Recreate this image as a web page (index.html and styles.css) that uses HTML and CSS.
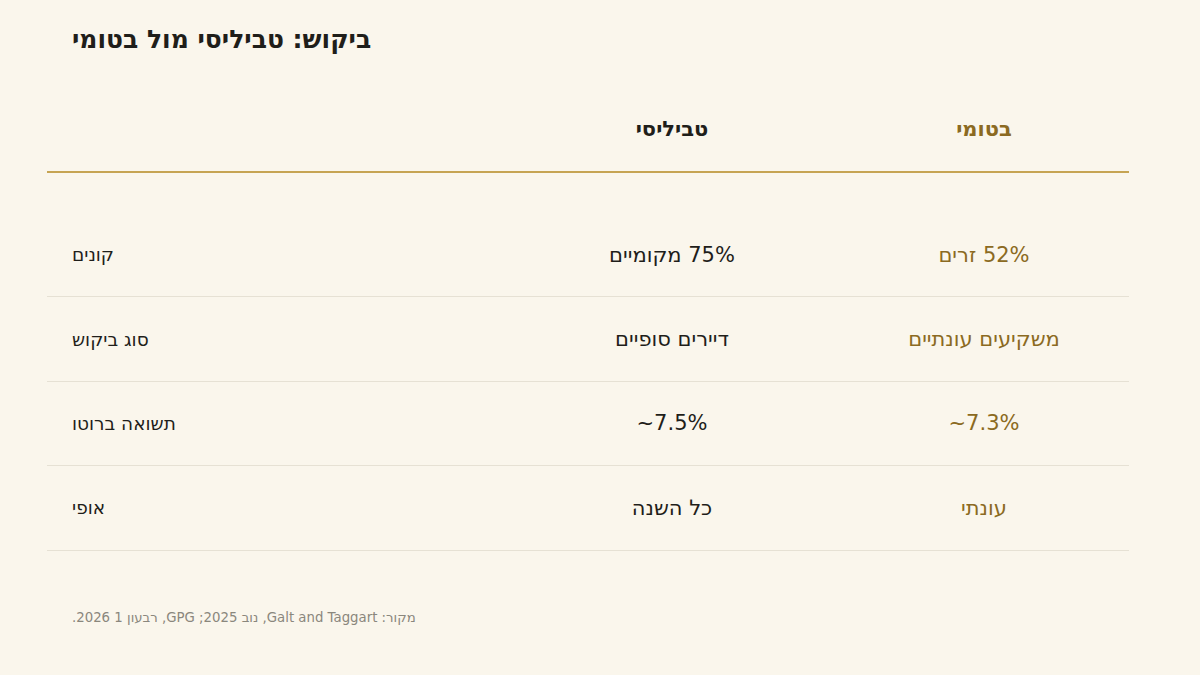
FILE: index.html
```html
<!DOCTYPE html>
<html lang="he">
<head>
<meta charset="utf-8">
<link rel="stylesheet" href="styles.css">
</head>
<body>
<main class="page">
  <h1 class="title">ביקוש: טביליסי מול בטומי</h1>
  <div class="table">
    <div class="row head">
      <div class="cell label"></div>
      <div class="cell mid">טביליסי</div>
      <div class="cell gold">בטומי</div>
    </div>
    <div class="body">
      <div class="row">
        <div class="cell label">קונים</div>
        <div class="cell mid">75% מקומיים</div>
        <div class="cell gold">52% זרים</div>
      </div>
      <div class="row">
        <div class="cell label">סוג ביקוש</div>
        <div class="cell mid">דיירים סופיים</div>
        <div class="cell gold">משקיעים עונתיים</div>
      </div>
      <div class="row">
        <div class="cell label">תשואה ברוטו</div>
        <div class="cell mid">~7.5%</div>
        <div class="cell gold">~7.3%</div>
      </div>
      <div class="row">
        <div class="cell label">אופי</div>
        <div class="cell mid">כל השנה</div>
        <div class="cell gold">עונתי</div>
      </div>
    </div>
  </div>
  <p class="source">מקור: Galt and Taggart, נוב 2025; GPG, רבעון 1 2026.</p>
</main>
</body>
</html>
```
FILE: styles.css
```css
html, body {
  margin: 0;
  padding: 0;
}
body {
  background: #faf6ec;
  color: #1f1e1a;
  font-family: "DejaVu Sans", "Noto Sans", sans-serif;
  width: 1200px;
  height: 675px;
  overflow: hidden;
}
.page {
  padding: 25px 71px 0 47px;
}
.title {
  margin: 0;
  padding-left: 25px;
  font-size: 25px;
  line-height: 30px;
  font-weight: bold;
  color: #1f1e1a;
  unicode-bidi: plaintext;
  text-align: left;
}
.table {
  margin-top: 31px;
}
.row {
  display: grid;
  grid-template-columns: 1fr 290px 290px;
  column-gap: 22px;
  align-items: center;
  box-sizing: border-box;
  height: 84.4px;
  border-bottom: 1px solid #e6e1d4;
}
.row.head {
  height: 87px;
  border-bottom: 2px solid #c6a453;
}
.body {
  padding-top: 40px;
}
.cell {
  unicode-bidi: plaintext;
  font-size: 21px;
  text-align: center;
}
.cell.label {
  text-align: left;
  padding-left: 25px;
  font-size: 18.5px;
}
.mid {
  color: #1f1e1a;
}
.gold {
  color: #8b6a22;
}
.head .cell {
  font-weight: bold;
}
.source {
  margin: 59px 0 0;
  padding-left: 25px;
  font-size: 13.3px;
  color: #8a877d;
  unicode-bidi: plaintext;
  text-align: left;
}
```
